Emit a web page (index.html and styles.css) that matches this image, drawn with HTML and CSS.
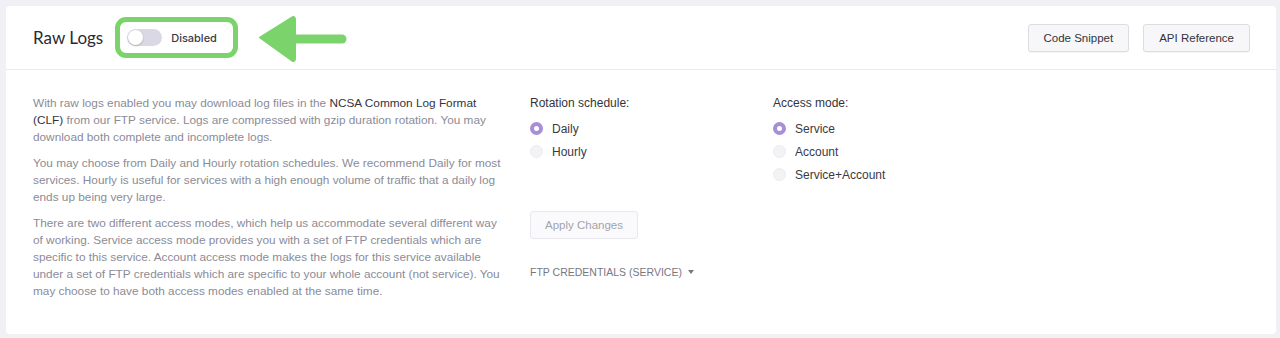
FILE: index.html
```html
<!DOCTYPE html>
<html>
<head>
    <meta charset="utf-8" />
    <title>Raw Logs</title>
    <link rel="stylesheet" href="styles.css">
</head>
<body>
    <div class="card">
        <div class="card-head">
            <h2 class="title">Raw Logs</h2>
            <div class="highlight">
                <span class="toggle"><span class="knob"></span></span>
                <span class="toggle-label">Disabled</span>
            </div>
            <svg class="arrow" width="90" height="48" viewBox="0 0 90 48">
                <path d="M2 22.5 L34 2.5 Q37 1 37 4.5 L37 43.5 Q37 47 34 45.5 Z" fill="#7bd36c" stroke="#7bd36c" stroke-width="2" stroke-linejoin="round" />
                <line x1="36" y1="24" x2="84" y2="24" stroke="#7bd36c" stroke-width="9" stroke-linecap="round" />
            </svg>
            <div class="head-actions">
                <a class="btn">Code Snippet</a>
                <a class="btn">API Reference</a>
            </div>
        </div>
        <div class="card-body">
            <div class="intro">
                <p>With raw logs enabled you may download log files in the <span class="dark">NCSA Common Log Format (CLF)</span> from our FTP service. Logs are compressed with gzip duration rotation. You may download both complete and incomplete logs.</p>
                <p>You may choose from Daily and Hourly rotation schedules. We recommend Daily for most services. Hourly is useful for services with a high enough volume of traffic that a daily log ends up being very large.</p>
                <p>There are two different access modes, which help us accommodate several different way of working. Service access mode provides you with a set of FTP credentials which are specific to this service. Account access mode makes the logs for this service available under a set of FTP credentials which are specific to your whole account (not service). You may choose to have both access modes enabled at the same time.</p>
            </div>
            <div class="settings">
                <div class="groups">
                    <div class="group">
                        <div class="group-label">Rotation schedule:</div>
                        <div class="radio on"><span class="dot"></span>Daily</div>
                        <div class="radio"><span class="dot"></span>Hourly</div>
                    </div>
                    <div class="group">
                        <div class="group-label">Access mode:</div>
                        <div class="radio on"><span class="dot"></span>Service</div>
                        <div class="radio"><span class="dot"></span>Account</div>
                        <div class="radio"><span class="dot"></span>Service+Account</div>
                    </div>
                </div>
                <a class="btn disabled">Apply Changes</a>
                <div class="creds">FTP CREDENTIALS (SERVICE) <span class="caret"></span></div>
            </div>
        </div>
    </div>
</body>
</html>
```

FILE: styles.css
```css
* {
    padding: 0;
    margin: 0;
    box-sizing: border-box;
}

body {
    padding: 6px 4px 4px 6px;
    background: #f1f1f5;
    font-family: "Liberation Sans", Arial, sans-serif;
    font-size: 12px;
    color: #3a3a44;
}

.card {
    background: #fff;
    border-radius: 4px;
    height: 328px;
}

.card-head {
    height: 64px;
    display: flex;
    align-items: center;
    padding: 0 26px 0 27px;
    border-bottom: 1px solid #e9e9ee;
}

.title {
    font-family: Lato, "Noto Sans", sans-serif;
    font-weight: normal;
    font-size: 17px;
    color: #2a2a33;
}

.highlight {
    margin-left: 12px;
    width: 123px;
    height: 41px;
    border: 5px solid #7bd36c;
    border-radius: 11px;
    display: flex;
    align-items: center;
    padding-left: 7px;
}

.toggle {
    width: 35px;
    height: 17px;
    border-radius: 9px;
    background: #d9d8e4;
    position: relative;
}

    .toggle .knob {
        position: absolute;
        left: 1px;
        top: 1px;
        width: 15px;
        height: 15px;
        border-radius: 50%;
        background: #fff;
        box-shadow: 0 1px 2px rgba(0,0,0,0.2);
    }

.toggle-label {
    margin-left: 9px;
    font-family: Inter, "Noto Sans", sans-serif;
    font-size: 11px;
    font-weight: 500;
    color: #3a3a44;
}

.arrow {
    margin-left: 20px;
    margin-top: 2px;
}

.head-actions {
    margin-left: auto;
    display: flex;
    gap: 14px;
}

.btn {
    display: inline-block;
    height: 28px;
    line-height: 26px;
    padding: 0 15px;
    border: 1px solid #dcdce2;
    border-radius: 3px;
    background: #f7f7f9;
    font-size: 11.5px;
    color: #33333c;
    box-shadow: 0 1px 1px rgba(0,0,0,0.04);
}

    .btn.disabled {
        color: #a3a3ad;
        border-color: #e8e8ee;
        background: #fafafc;
        box-shadow: none;
        padding: 0 14px;
    }

.card-body {
    display: flex;
    padding: 25px 0 0 27px;
}

.intro {
    width: 474px;
    color: #8b8b97;
    line-height: 17px;
    font-size: 11.8px;
}

    .intro p {
        margin-bottom: 9px;
    }

.dark {
    color: #33333c;
}

.settings {
    margin-left: 23px;
}

.groups {
    display: flex;
}

.group {
    width: 243px;
}

.group-label {
    line-height: 17px;
    color: #33333c;
    margin-bottom: 5px;
}

.radio {
    display: flex;
    align-items: center;
    height: 23px;
    color: #3a3a44;
}

    .radio .dot {
        width: 13px;
        height: 13px;
        border-radius: 50%;
        background: #f3f3f6;
        border: 1px solid #ececf1;
        margin-right: 9px;
    }

    .radio.on .dot {
        background: #fff;
        border: 4px solid #a68ed8;
    }

.settings .btn.disabled {
    margin-top: 25px;
}

.creds {
    margin-top: 27px;
    font-size: 10.5px;
    color: #777782;
}

.caret {
    display: inline-block;
    margin-left: 3px;
    vertical-align: 2px;
    border-left: 3.5px solid transparent;
    border-right: 3.5px solid transparent;
    border-top: 4px solid #777782;
}
```
